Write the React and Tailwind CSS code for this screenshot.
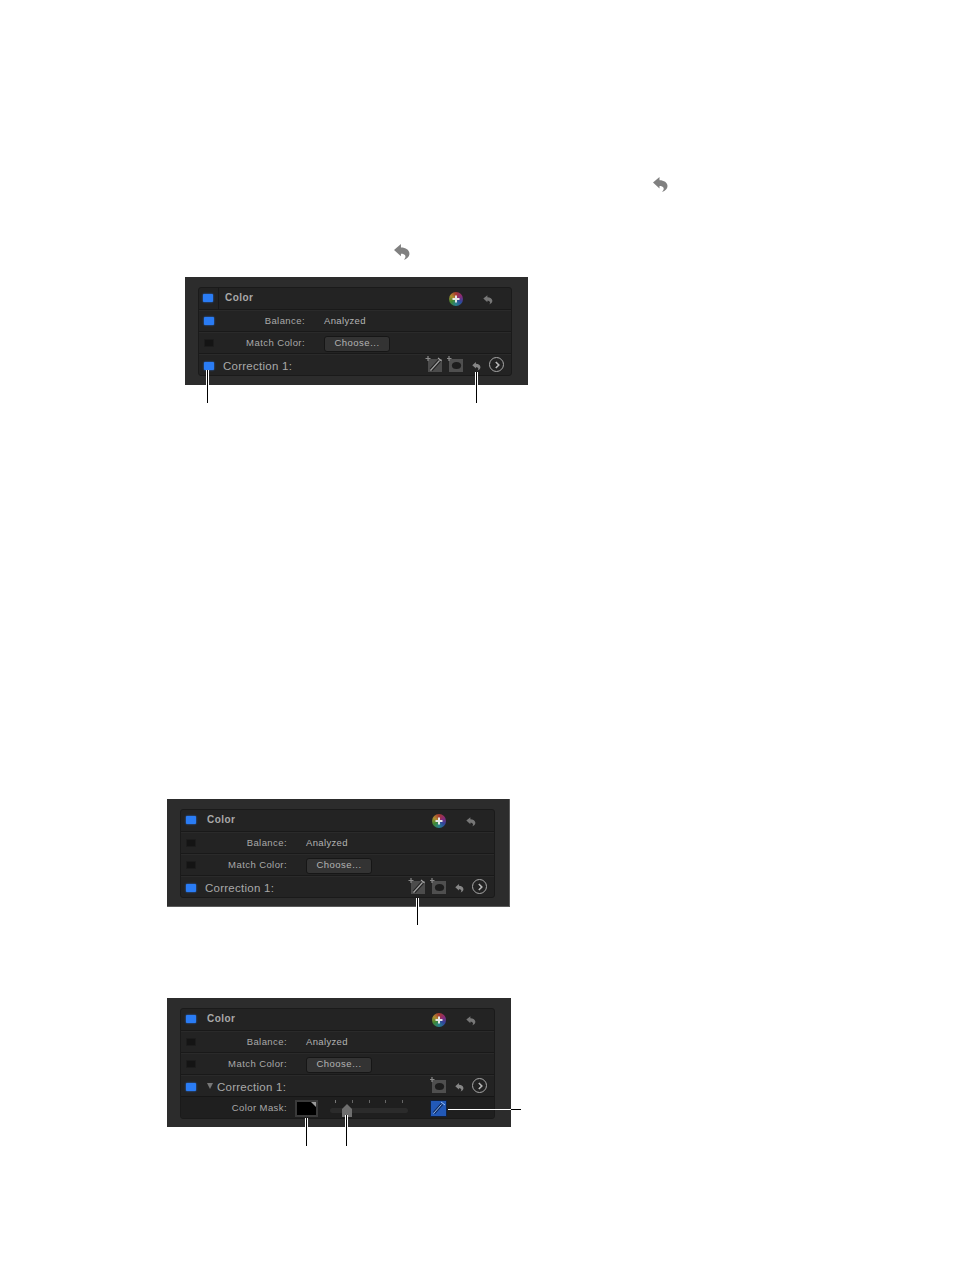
const UNDO = "M0.5 6.5 L7 1 V4.2 C11.5 4.2 15 6.5 15 10 C15 12.8 13 14.8 9.5 16 C11 14.5 11.6 13.2 11 11.8 C10.4 10.6 9 10 7 10 V12.5 Z";

function Undo({ className }) {
  return (
    <svg viewBox="0 0 16 16" className={className}>
      <path d={UNDO} fill="currentColor" />
    </svg>
  );
}

function Check({ on }) {
  return (
    <div
      className={
        on
          ? "w-[10px] h-[8px] rounded-[1px] bg-[#2a7cf5] shadow-[0_0_2px_#2a7cf5]"
          : "w-[10px] h-[8px] rounded-[1px] bg-[#141414] border border-[#1c1c1c]"
      }
    />
  );
}

function Row({ on, label, children }) {
  return (
    <div className="flex items-center h-[22px] border-t border-[#191919] shadow-[inset_0_1px_0_#2a2a2a]">
      <div className="w-[20px] flex justify-center pr-px">
        <Check on={on} />
      </div>
      <div className="w-[86px] pt-[2px] text-right text-[9.5px] tracking-[0.42px] text-[#a9a9a9]">{label}</div>
      <div className="ml-[19px] pt-[2px] flex items-center">{children}</div>
    </div>
  );
}

function ChooseButton() {
  return (
    <div className="w-[66px] h-[16px] flex items-center justify-center rounded-[3px] bg-[#333333] border border-[#161616] text-[9.5px] tracking-[0.5px] text-[#b4b4b4]">
      Choose...
    </div>
  );
}

function Wheel() {
  return (
    <div className="w-[14px] h-[14px] rounded-full flex items-center justify-center bg-[conic-gradient(#a8392f,#8a2a78,#2f459c,#26808c,#3f8632,#ad8e2f,#a8392f)]">
      <svg viewBox="0 0 8 8" className="w-[8px] h-[8px]">
        <path d="M3 0.5h2v2.5h2.5v2h-2.5v2.5h-2v-2.5h-2.5v-2h2.5z" fill="#e6e6e6" />
      </svg>
    </div>
  );
}

function MaskIcon() {
  return (
    <svg viewBox="0 0 18 17" className="w-[18px] h-[17px]">
      <path d="M3 3h14v13H3z" fill="#4c4c4c" />
      <path d="M3 0v5M0.5 2.5h5" stroke="#8a8a8a" strokeWidth="1.2" />
      <path d="M6 14l9-10" stroke="#232323" strokeWidth="3.5" />
      <path d="M5.5 14.5l9-10M13 2l3.5 3" stroke="#a0a0a0" strokeWidth="1.2" />
    </svg>
  );
}

function ShapeIcon() {
  return (
    <svg viewBox="0 0 18 17" className="w-[18px] h-[17px]">
      <path d="M2 3h14v13H2z" fill="#4f4f4f" />
      <path d="M2 0v5M0 2.5h4.5" stroke="#8a8a8a" strokeWidth="1.2" />
      <ellipse cx="9.5" cy="9.5" rx="4.6" ry="3.5" fill="#1d1d1d" />
    </svg>
  );
}

function Arrow() {
  return (
    <div className="w-[15px] h-[15px] rounded-full border-[1.5px] border-[#a8a8a8] flex items-center justify-center">
      <svg viewBox="0 0 8 8" className="w-[8px] h-[8px]">
        <path d="M2.8 1l3 3-3 3" fill="none" stroke="#b8b8b8" strokeWidth="1.6" />
      </svg>
    </div>
  );
}

function Header({ divider, colorOn }) {
  return (
    <div className="flex items-center h-[21px]">
      <div className={divider ? "w-[20px] h-full flex items-center justify-center pr-px pb-[2px] border-r border-[#191919]" : "w-[20px] h-full flex items-center justify-center pr-px pb-[2px]"}>
        <Check on={colorOn} />
      </div>
      <div className="ml-[6px] mb-[3px] text-[10px] font-bold tracking-[0.45px] text-[#a9a9a9]">Color</div>
      <div className="ml-auto flex items-center pr-[18px]">
        <Wheel />
        <Undo className="ml-[20px] mt-px w-[10px] h-[11px] text-[#777777]" />
      </div>
    </div>
  );
}

function Correction({ open, mask }) {
  return (
    <div className="flex items-center h-[22px] border-t border-[#191919] shadow-[inset_0_1px_0_#2a2a2a]">
      <div className="w-[20px] flex justify-center pr-px pt-[2px]">
        <Check on />
      </div>
      {open && <div className="ml-[6px] mt-px w-0 h-0 border-x-[3.5px] border-x-transparent border-t-[6px] border-t-[#777777]" />}
      <div className="ml-[4px] pt-[5px] text-[11.5px] tracking-[0.25px] text-[#a9a9a9]">
        Correction 1:
      </div>
      <div className="ml-auto flex items-center pr-[7px]">
        {mask && <MaskIcon />}
        <div className="ml-[4px]">
          <ShapeIcon />
        </div>
        <Undo className="ml-[7px] mt-[3px] w-[9px] h-[10px] text-[#868686]" />
        <div className="ml-[8px]">
          <Arrow />
        </div>
      </div>
    </div>
  );
}

function MaskRow() {
  return (
    <div className="flex items-center h-[22px] pt-[2px] bg-[#1f1f1f] border-t border-[#161616]">
      <div className="w-[106px] text-right text-[9.5px] tracking-[0.42px] text-[#a9a9a9]">Color Mask:</div>
      <div className="relative ml-[8px] w-[23px] h-[17px] bg-black border-2 border-[#3a3a3a]">
        <div className="absolute top-0 right-0 w-0 h-0 border-l-[5px] border-l-transparent border-t-[5px] border-t-[#9a9a9a]" />
      </div>
      <div className="relative ml-[12px] w-[78px] h-[18px]">
        <div className="flex justify-between px-[5px]">
          <div className="w-px h-[3px] bg-[#777777]" />
          <div className="w-px h-[3px] bg-[#666666]" />
          <div className="w-px h-[3px] bg-[#666666]" />
          <div className="w-px h-[3px] bg-[#666666]" />
          <div className="w-px h-[3px] bg-[#666666]" />
        </div>
        <div className="mt-[5px] h-[5px] rounded-full bg-[#2b2b2b]" />
        <svg viewBox="0 0 10 13" className="absolute left-[12px] top-[4px] w-[10px] h-[13px]">
          <path d="M5 0L10 5V13H0V5Z" fill="#6e6e6e" />
        </svg>
      </div>
      <div className="ml-[22px] w-[17px] h-[17px] border border-[#10213f] bg-[#2259b8]">
        <svg viewBox="0 0 15 15" className="w-[15px] h-[15px]">
          <path d="M3 12l8-9" stroke="#0e2a60" strokeWidth="3" />
          <path d="M2.5 12.5l8-9M10 1l4 3" stroke="#9cc0f2" strokeWidth="1" />
        </svg>
      </div>
    </div>
  );
}

// callout leader line, white edges show only where it crosses the panel
function Leader({ className }) {
  return <div className={"absolute w-[3px] bg-black border-x border-white " + className} />;
}

function Panel({ className, children }) {
  return <div className={"relative bg-[#2c2c2c] " + className}>{children}</div>;
}

function Box({ children }) {
  return (
    <div className="bg-[#232323] border border-[#1a1a1a] rounded-[3px] overflow-hidden">
      {children}
    </div>
  );
}

export default function App() {
  return (
    <div className="relative h-[1263px] bg-white overflow-hidden font-['Liberation_Sans',sans-serif]">
      <Undo className="ml-[652px] mt-[176px] w-[17px] h-[16px] text-[#808080]" />
      <Undo className="ml-[393px] mt-[51px] w-[18px] h-[17px] text-[#808080]" />

      <Panel className="ml-[185px] mt-[17px] w-[343px] h-[108px] pt-[10px] pl-[13px] pr-[16px]">
        <Box>
          <Header divider colorOn />
          <Row on label="Balance:">
            <span className="text-[9.5px] tracking-[0.35px] text-[#b4b4b4]">Analyzed</span>
          </Row>
          <Row label="Match Color:">
            <ChooseButton />
          </Row>
          <Correction mask />
        </Box>
        <Leader className="left-[21px] top-[93px] h-[33px]" />
        <Leader className="left-[290px] top-[95px] h-[31px]" />
      </Panel>

      <Panel className="ml-[167px] mt-[414px] w-[343px] h-[108px] pt-[10px] pl-[13px] pr-[15px] shadow-[inset_-1px_-1px_0_#5a5a5a]">
        <Box>
          <Header colorOn />
          <Row label="Balance:">
            <span className="text-[9.5px] tracking-[0.35px] text-[#b4b4b4]">Analyzed</span>
          </Row>
          <Row label="Match Color:">
            <ChooseButton />
          </Row>
          <Correction mask />
        </Box>
        <Leader className="left-[249px] top-[99px] h-[27px]" />
      </Panel>

      <Panel className="ml-[167px] mt-[91px] w-[344px] h-[129px] pt-[10px] pl-[13px] pr-[16px]">
        <Box>
          <Header colorOn />
          <Row label="Balance:">
            <span className="text-[9.5px] tracking-[0.35px] text-[#b4b4b4]">Analyzed</span>
          </Row>
          <Row label="Match Color:">
            <ChooseButton />
          </Row>
          <Correction open />
          <MaskRow />
        </Box>
        <Leader className="left-[138px] top-[120px] h-[28px]" />
        <Leader className="left-[178px] top-[117px] h-[31px]" />
        <div className="absolute left-[281px] top-[111px] w-[63px] h-px bg-white" />
        <div className="absolute left-[344px] top-[111px] w-[10px] h-px bg-black" />
      </Panel>
    </div>
  );
}
